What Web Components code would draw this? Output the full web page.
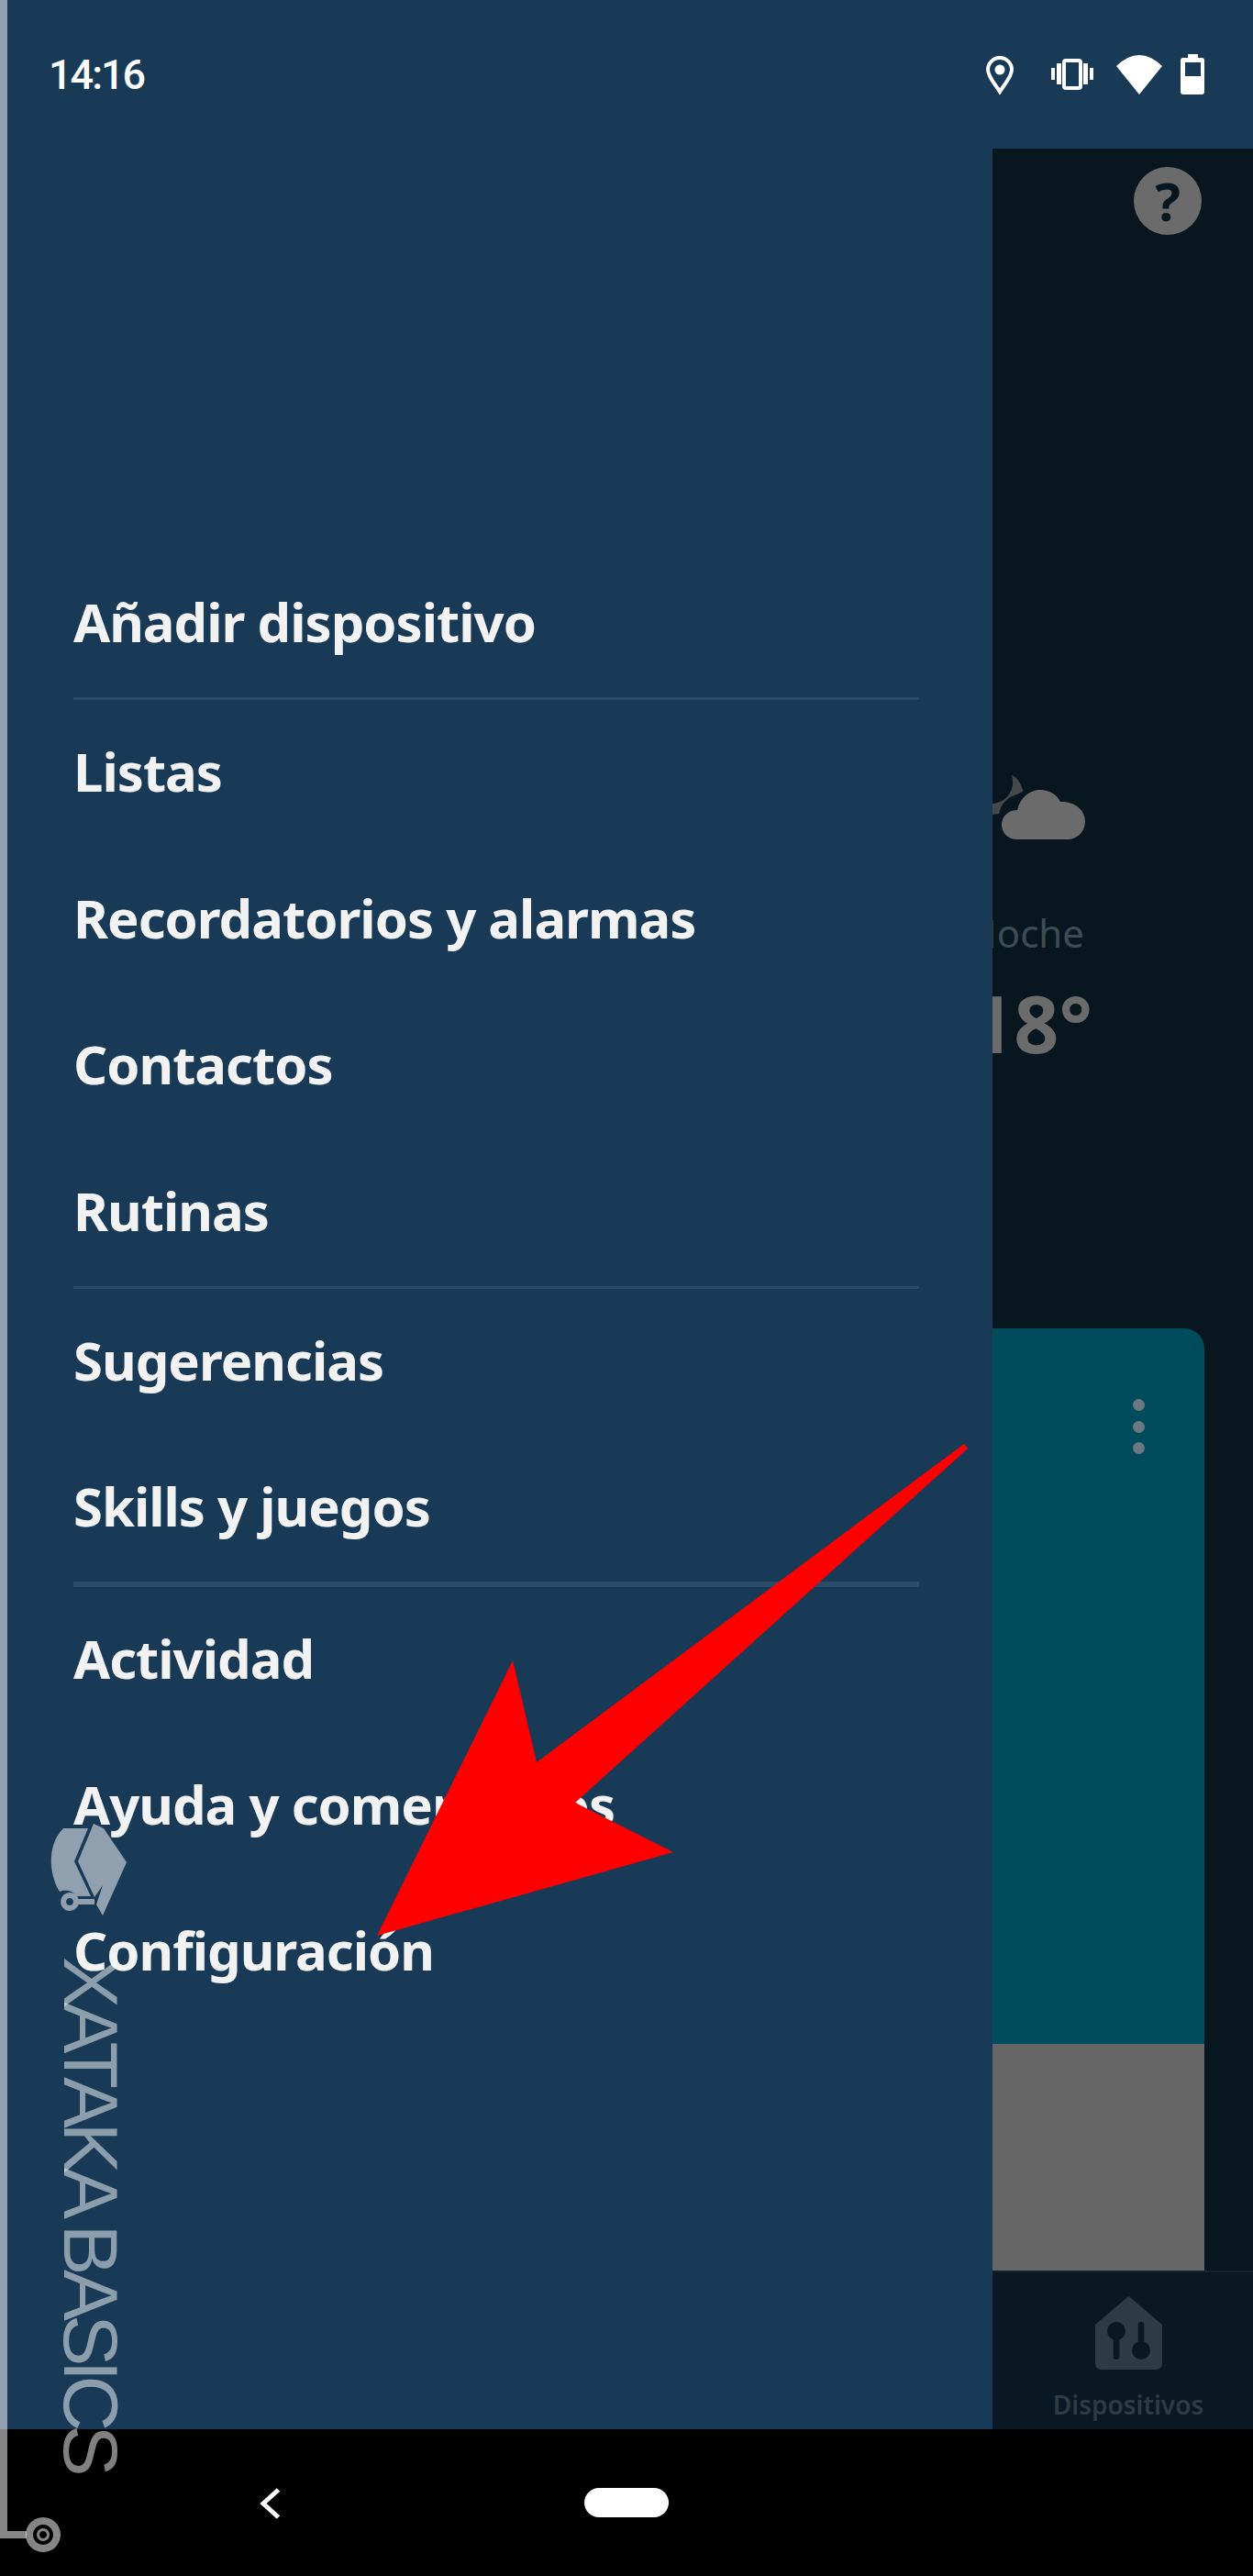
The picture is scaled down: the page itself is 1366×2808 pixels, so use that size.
<!DOCTYPE html>
<html lang="es">
<head>
<meta charset="UTF-8">
<title>Alexa menu</title>
<style>
  html, body { margin: 0; padding: 0; background: #000; }
</style>
</head>
<body>
<phone-screen>
  <status-bar slot="status"></status-bar>
  <home-view slot="main">
    <side-drawer slot="drawer">
      <menu-group style="--rule:3px"><menu-item>Añadir dispositivo</menu-item></menu-group>
      <menu-group style="--rule:3px;--row:159.7px">
        <menu-item>Listas</menu-item>
        <menu-item>Recordatorios y alarmas</menu-item>
        <menu-item>Contactos</menu-item>
        <menu-item>Rutinas</menu-item>
      </menu-group>
      <menu-group style="--rule:6px;--row:159.5px">
        <menu-item>Sugerencias</menu-item>
        <menu-item>Skills y juegos</menu-item>
      </menu-group>
      <menu-group style="--rule:0px;--row:159px">
        <menu-item>Actividad</menu-item>
        <menu-item>Ayuda y comentarios</menu-item>
        <menu-item>Configuración</menu-item>
      </menu-group>
    </side-drawer>
  </home-view>
  <system-nav slot="nav"></system-nav>
  <brand-watermark slot="overlay"></brand-watermark>
  <arrow-mark slot="overlay"></arrow-mark>
</phone-screen>

<script>
  const SANS = `"Noto Sans", "Liberation Sans", sans-serif`;

  class PhoneScreen extends HTMLElement {
    constructor() {
      super();
      this.attachShadow({mode: "open"}).innerHTML = `
<style>
  :host { display: flex; flex-direction: column; position: relative; width: 1366px; height: 2808px; overflow: hidden; font-family: ${SANS}; }
</style>
<slot name="status"></slot>
<slot name="main"></slot>
<slot name="nav"></slot>
<slot name="overlay"></slot>`;
    }
  }

  class StatusBar extends HTMLElement {
    constructor() {
      super();
      this.attachShadow({mode: "open"}).innerHTML = `
<style>
  :host { display: flex; justify-content: space-between; height: 162px; box-sizing: border-box; padding: 59px 53px 0 53px; background: #183a56; color: #fff; flex: none; }
  .time { font: 500 45px/46px Roboto, sans-serif; letter-spacing: -2px; }
  .icons { display: flex; align-items: flex-start; }
  svg { display: block; fill: #fff; }
</style>
<span class="time">14:16</span>
<div class="icons">
  <svg width="30" height="42" viewBox="0 0 30 42" style="margin-top:2px">
    <path d="M15 39 C11 32 2 23 2 15 A13 13 0 0 1 28 15 C28 23 19 32 15 39Z" fill="none" stroke="#fff" stroke-width="4"/>
    <circle cx="15" cy="15" r="5.5"/>
  </svg>
  <svg width="46" height="34" viewBox="0 0 46 34" style="margin:5px 0 0 41px">
    <rect x="14" y="2" width="18" height="30" rx="2" fill="none" stroke="#fff" stroke-width="4"/>
    <rect x="6" y="5" width="5" height="23"/><rect x="35" y="5" width="5" height="23"/>
    <rect x="0" y="10" width="4" height="13"/><rect x="42" y="10" width="4" height="13"/>
  </svg>
  <svg width="50" height="43" viewBox="0 0 50 43" style="margin:1px 0 0 25px">
    <path d="M25 43 L0 12 Q25 -12 50 12Z"/>
  </svg>
  <svg width="26" height="44" viewBox="0 0 26 44" style="margin-left:20px">
    <path d="M8 0H19V4H23Q26 4 26 7V41Q26 44 23 44H3Q0 44 0 41V7Q0 4 3 4H8Z"/>
    <rect x="5" y="9" width="17" height="15" fill="#183a56"/>
  </svg>
</div>`;
    }
  }

  class HomeView extends HTMLElement {
    constructor() {
      super();
      this.attachShadow({mode: "open"}).innerHTML = `
<style>
  :host { display: flex; flex-direction: column; position: relative; flex: none; height: 2486px; background: #08161f; }
  .help { align-self: flex-end; display: flex; align-items: center; justify-content: center; width: 74px; height: 74px; margin: 20px 56px 0 0; border-radius: 50%; background: #6b6b6b; color: #08161f; font: 700 58px/74px ${SANS}; }
</style>
<div class="help">?</div>
<weather-panel></weather-panel>
<device-card></device-card>
<tab-bar></tab-bar>
<slot name="drawer"></slot>`;
    }
  }

  class WeatherPanel extends HTMLElement {
    constructor() {
      super();
      this.attachShadow({mode: "open"}).innerHTML = `
<style>
  :host { display: flex; flex-direction: column; align-items: flex-end; padding-right: 175px; }
  svg { display: block; margin: 589px 8px 0 0; }
  .label { margin: 74px 9px 0 0; color: #3c4c56; font: 400 42px/56px ${SANS}; }
  .temp { margin-top: 18px; color: #6b6b6b; font: 700 86px/104px ${SANS}; }
</style>
<svg width="101" height="70" viewBox="0 0 101 70">
  <path d="M21 0 C27 2 33 12 33 18 L24 22 C15 25 9 32 7 42 L0 43 L0 31 C14 30 26 17 21 0Z" fill="#45494e"/>
  <path d="M27 70 C16 70 10 62 10 54 C10 45 17 38 27 38 C30 24 41 16 52 16 C62 16 70 21 74 29 C89 28 101 38 101 50 C101 62 92 70 82 70Z" fill="#6b6b6b"/>
</svg>
<span class="label">Noche</span>
<span class="temp">18°</span>`;
    }
  }

  class DeviceCard extends HTMLElement {
    constructor() {
      super();
      this.attachShadow({mode: "open"}).innerHTML = `
<style>
  :host { display: flex; flex-direction: column; position: absolute; left: 53px; right: 53px; top: 1286px; height: 1027px; border-radius: 22px 22px 0 0; overflow: hidden; background: #004b5c; }
  .body { flex: 1; display: flex; flex-direction: column; align-items: flex-end; gap: 10.5px; padding: 77px 65px 0 0; }
  .dot { width: 13px; height: 13px; border-radius: 50%; background: #6b7a80; }
  .media { height: 247px; background: #666; }
</style>
<div class="body"><span class="dot"></span><span class="dot"></span><span class="dot"></span></div>
<div class="media"></div>`;
    }
  }

  class TabBar extends HTMLElement {
    constructor() {
      super();
      this.attachShadow({mode: "open"}).innerHTML = `
<style>
  :host { display: flex; justify-content: flex-end; position: absolute; left: 0; right: 0; top: 2313px; height: 173px; box-sizing: border-box; padding: 26px 54px 0 0; background: #0a1823; border-top: 2px solid #14222c; }
  .tab { display: flex; flex-direction: column; align-items: center; width: 164px; color: #2e3b46; font: 600 28px/36px ${SANS}; }
  svg { display: block; margin-bottom: 20px; }
</style>
<div class="tab">
  <svg width="73" height="80" viewBox="0 0 73 80">
    <path d="M36.5 0 L73 31 V73 Q73 80 66 80 H7 Q0 80 0 73 V31Z" fill="#2e3b46"/>
    <circle cx="23" cy="38" r="10" fill="#0a1823"/>
    <rect x="19.7" y="38" width="6.6" height="31" rx="3.3" fill="#0a1823"/>
    <circle cx="50" cy="59" r="10" fill="#0a1823"/>
    <rect x="46.7" y="28" width="6.6" height="31" rx="3.3" fill="#0a1823"/>
  </svg>
  <span>Dispositivos</span>
</div>`;
    }
  }

  class SideDrawer extends HTMLElement {
    constructor() {
      super();
      this.attachShadow({mode: "open"}).innerHTML = `
<style>
  :host { display: block; position: absolute; left: 0; top: 0; bottom: 0; width: 1082px; box-sizing: border-box; padding: 438px 80px 0; background: #183a56; }
</style>
<slot></slot>`;
    }
  }

  class MenuGroup extends HTMLElement {
    constructor() {
      super();
      this.attachShadow({mode: "open"}).innerHTML = `
<style>
  :host { display: block; border-bottom: var(--rule, 3px) solid #2b4c68; }
</style>
<slot></slot>`;
    }
  }

  class MenuItem extends HTMLElement {
    constructor() {
      super();
      this.attachShadow({mode: "open"}).innerHTML = `
<style>
  :host { display: block; height: var(--row, 160px); color: #f2f2f2; font: 700 58px/155px ${SANS}; letter-spacing: -1px; white-space: nowrap; }
</style>
<slot></slot>`;
    }
  }

  class SystemNav extends HTMLElement {
    constructor() {
      super();
      this.attachShadow({mode: "open"}).innerHTML = `
<style>
  :host { display: flex; align-items: flex-start; height: 160px; flex: none; box-sizing: border-box; padding: 64px 0 0 283px; background: #000; }
  svg { display: block; }
  .pill { width: 92px; height: 32px; margin-left: 331px; border-radius: 16px; background: #fff; }
</style>
<svg width="23" height="34" viewBox="0 0 23 34">
  <path d="M20.5 2 L4 17 L20.5 32" fill="none" stroke="#fff" stroke-width="5"/>
</svg>
<div class="pill"></div>`;
    }
  }

  class BrandWatermark extends HTMLElement {
    constructor() {
      super();
      this.attachShadow({mode: "open"}).innerHTML = `
<style>
  :host { display: block; position: absolute; left: 0; top: 0; width: 200px; height: 2808px; color: rgba(255,255,255,.5); pointer-events: none; }
  svg { position: absolute; left: 0; top: 0; }
  .name { position: absolute; left: 55px; top: 2133px; writing-mode: vertical-rl; font: 400 84px/88px "Liberation Sans", sans-serif; letter-spacing: -6.6px; white-space: nowrap; }
</style>
<svg width="200" height="2808" viewBox="0 0 200 2808" fill="rgba(255,255,255,.52)">
  <path d="M0 0 H8 V2759 H29 V2767 H0Z"/>
  <path fill-rule="evenodd" d="M47 2744 a19 19 0 1 0 .01 0Z M47 2752 a11 11 0 1 1 -.01 0Z M47 2756 a7 7 0 1 0 .01 0Z M47 2759 a4 4 0 1 1 -.01 0Z"/>
  <path d="M69 1993 H96 L81 2029 L99 2067 L84 2067 C78 2060 70 2060 65 2062 C54 2045 50 2012 69 1993Z"/>
  <path d="M102 1988 L113 1993 L138 2030 L112 2088 L105 2076 L112 2055 L103 2068 L85 2029Z"/>
  <path fill-rule="evenodd" d="M76 2063 a10 10 0 0 1 9.6 7 H103 v6 H85.6 A10 10 0 1 1 76 2063Z M76 2069 a4 4 0 1 0 .01 0Z"/>
</svg>
<span class="name">XATAKA BASICS</span>`;
    }
  }

  class ArrowMark extends HTMLElement {
    constructor() {
      super();
      this.attachShadow({mode: "open"}).innerHTML = `
<style>
  :host { display: block; position: absolute; left: 0; top: 0; width: 1366px; height: 2808px; pointer-events: none; }
  svg { display: block; }
</style>
<svg width="1366" height="2808" viewBox="0 0 1366 2808">
  <polygon fill="#f00" points="1051,1574 1055,1579 627,1965 734,2019 411,2110 559,1810 585,1921"/>
</svg>`;
    }
  }

  window.customElements.define('phone-screen', PhoneScreen);
  window.customElements.define('status-bar', StatusBar);
  window.customElements.define('home-view', HomeView);
  window.customElements.define('weather-panel', WeatherPanel);
  window.customElements.define('device-card', DeviceCard);
  window.customElements.define('tab-bar', TabBar);
  window.customElements.define('side-drawer', SideDrawer);
  window.customElements.define('menu-group', MenuGroup);
  window.customElements.define('menu-item', MenuItem);
  window.customElements.define('system-nav', SystemNav);
  window.customElements.define('brand-watermark', BrandWatermark);
  window.customElements.define('arrow-mark', ArrowMark);
</script>
</body>
</html>
